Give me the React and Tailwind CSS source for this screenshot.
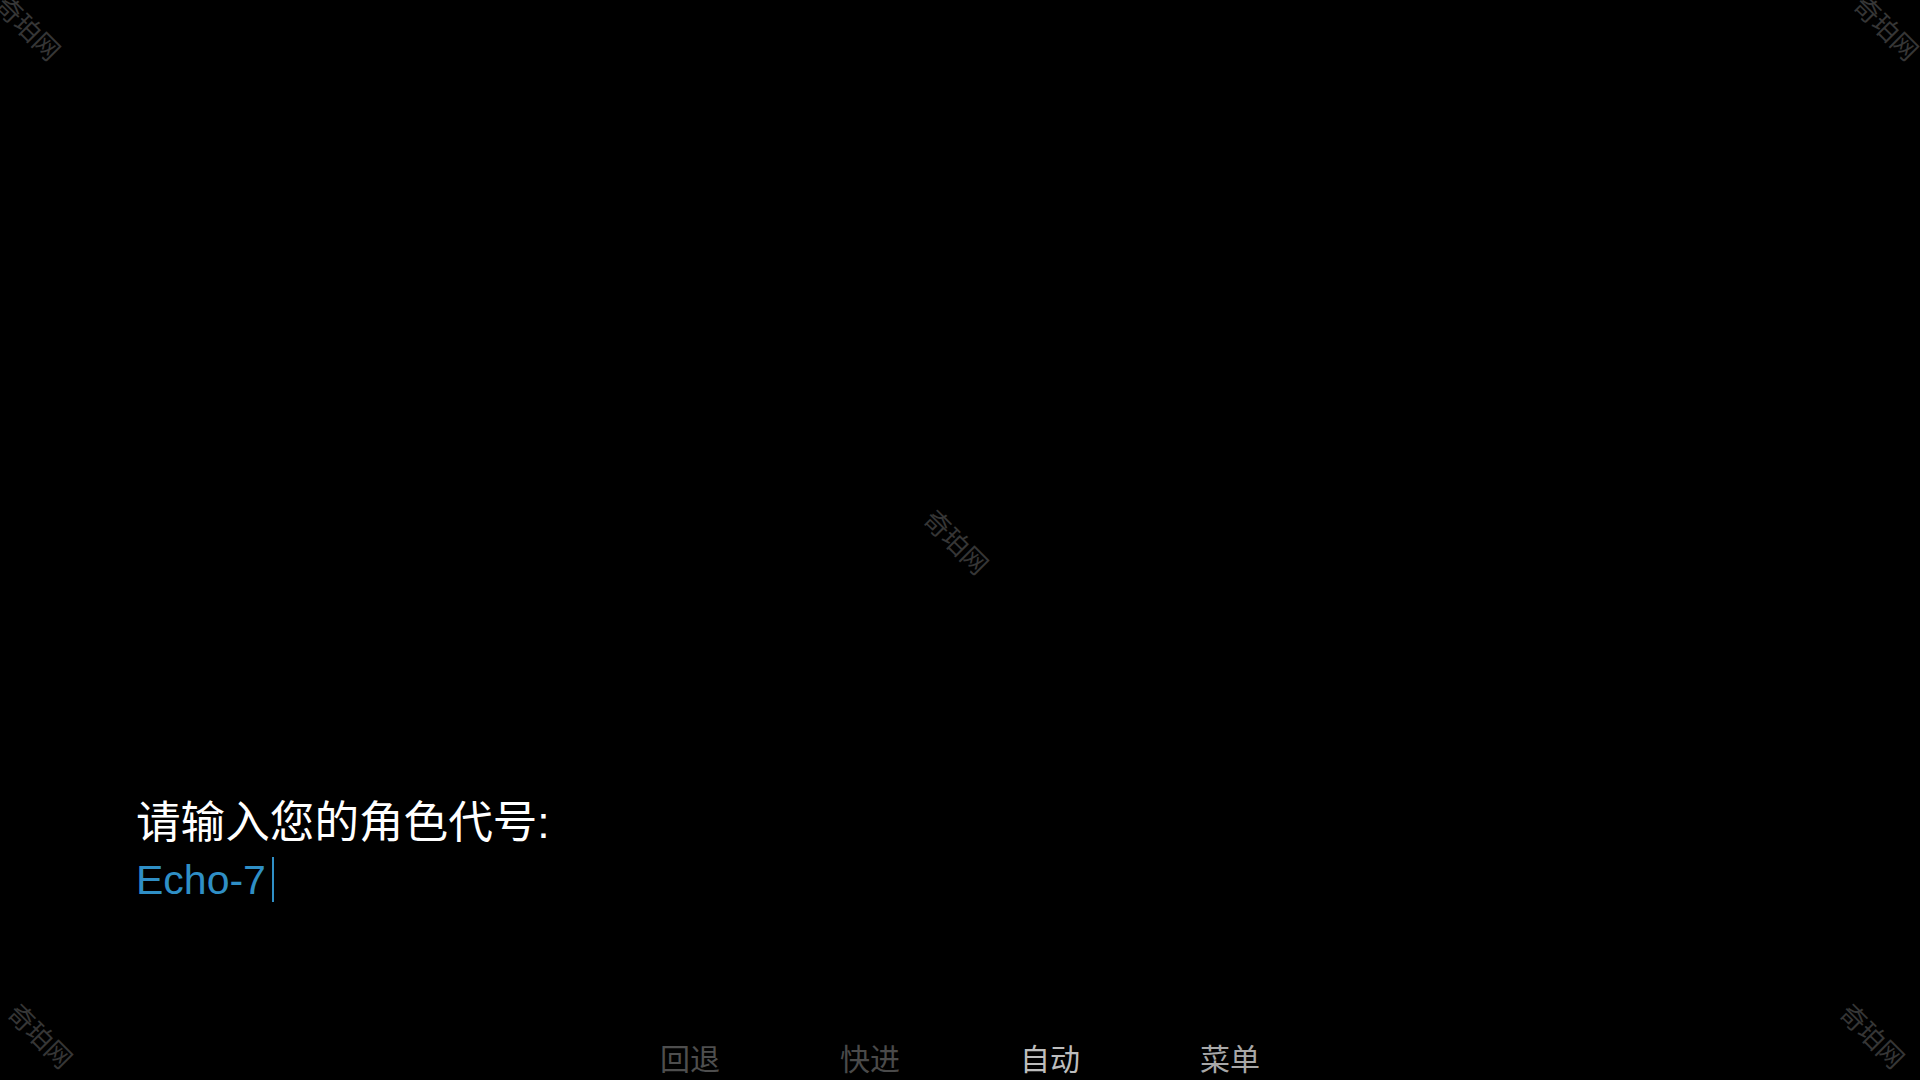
import React from "react";

const cjk = { fontFamily: '"Liberation Sans", "Noto Sans CJK SC", sans-serif' };
const latin = { fontFamily: '"Liberation Sans", "Noto Sans CJK SC", sans-serif' };

function Watermark({ className }) {
  return (
    <div
      className={"pointer-events-none absolute select-none text-[26px] leading-none text-[#363636] rotate-45 " + className}
      style={{ fontFamily: '"Noto Sans CJK SC", sans-serif' }}
    >
      奇珀网
    </div>
  );
}

export default function App() {
  return (
    <div className="relative flex h-screen w-full flex-col overflow-hidden bg-black">
      <Watermark className="left-[-10px] top-[14px]" />
      <Watermark className="right-[-6px] top-[14px]" />
      <Watermark className="left-[2px] top-[1022px]" />
      <Watermark className="right-[8px] top-[1022px]" />
      <Watermark className="left-[918px] top-[528px]" />

      <div className="flex-1" />

      <div className="flex flex-col pl-[136px]">
        <div className="text-[44.6px] leading-[45px] text-white" style={cjk}>
          请输入您的角色代号:
        </div>
        <div className="mt-[12px] flex items-center">
          <span className="text-[41px] leading-[42px] text-[#2f8fc6]" style={latin}>
            Echo-7
          </span>
          <span className="ml-[6px] h-[45px] w-[2px] bg-[#2f8fc6]" />
        </div>
      </div>

      <div
        className="mt-[140px] flex justify-center gap-[120px] pb-[8px] text-[30px] leading-[30px]"
        style={{ fontFamily: '"Noto Sans CJK SC", sans-serif' }}
      >
        <span className="text-[#4e4e4e]">回退</span>
        <span className="text-[#4a4a4a]">快进</span>
        <span className="text-[#bdbdbd]">自动</span>
        <span className="text-[#a8a8a8]">菜单</span>
      </div>
    </div>
  );
}
